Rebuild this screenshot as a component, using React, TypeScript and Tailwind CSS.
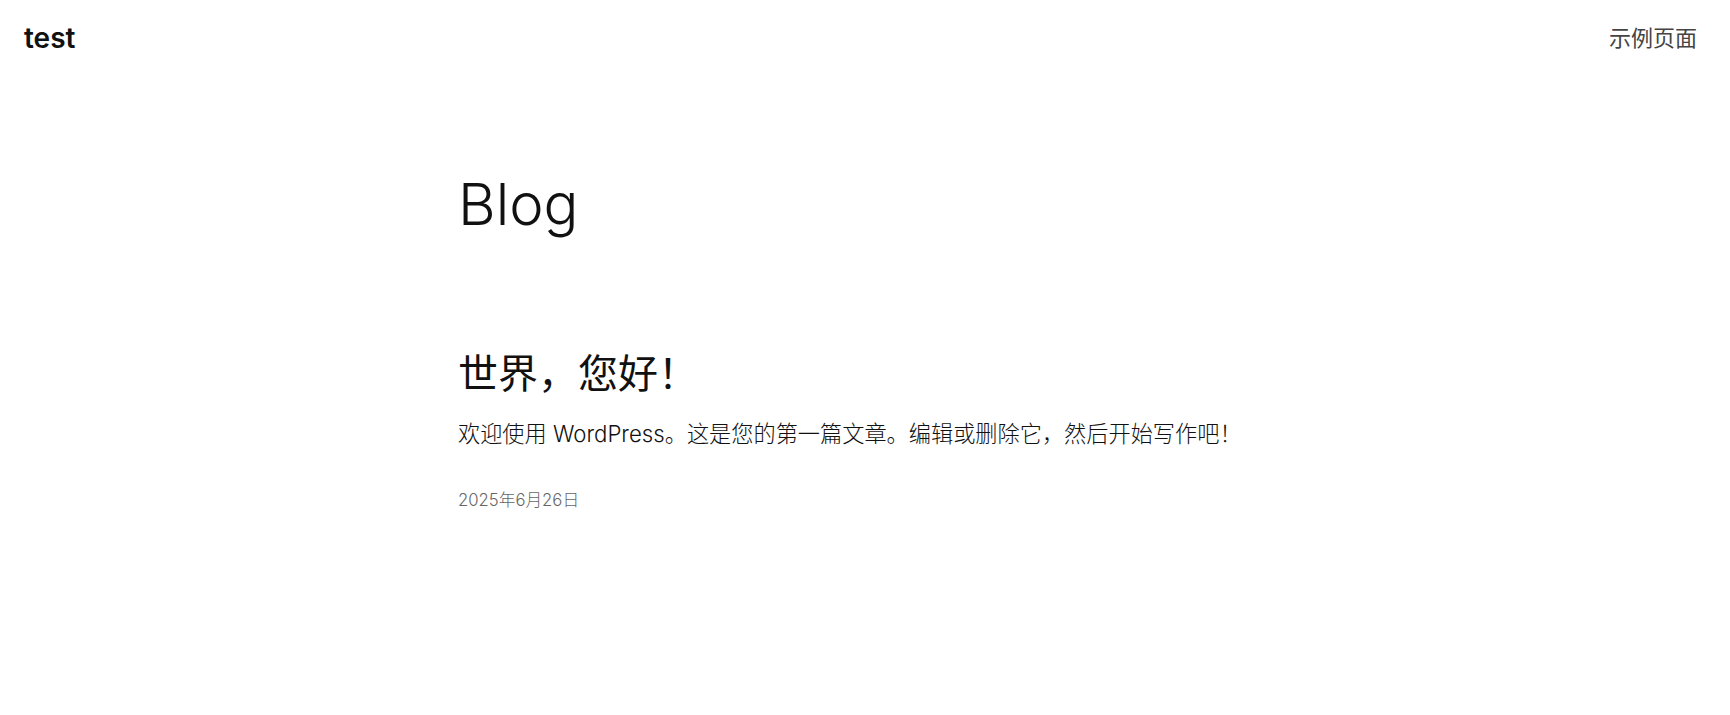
import React from "react";

const App: React.FC = () => {
  return (
    <div className="min-h-screen bg-white text-[#111111] font-['Inter','Noto_Sans_CJK_SC',sans-serif]">
      <header className="flex items-center justify-between pl-6 pr-[33px] pt-[22px]">
        <a href="#" className="text-[28px] font-semibold leading-[32px] text-[#111111]">
          test
        </a>
        <nav>
          <a href="#" className="text-[22px] font-normal leading-[32px] text-[#444444]">
            示例页面
          </a>
        </nav>
      </header>

      <main className="mx-auto w-[814px] pt-[115px]">
        <h1 className="text-[58px] font-light leading-[70px]">Blog</h1>

        <article className="mt-[111px]">
          <h2 className="text-[40px] font-normal leading-[48px]">世界，您好！</h2>
          <p className="mt-[18px] text-[22.2px] font-light leading-[36px]">
            欢迎使用 WordPress。这是您的第一篇文章。编辑或删除它，然后开始写作吧！
          </p>
          <p className="mt-[35px] text-[16.7px] font-light leading-[26px] text-[#666666]">
            2025年6月26日
          </p>
        </article>
      </main>
    </div>
  );
};

export default App;
